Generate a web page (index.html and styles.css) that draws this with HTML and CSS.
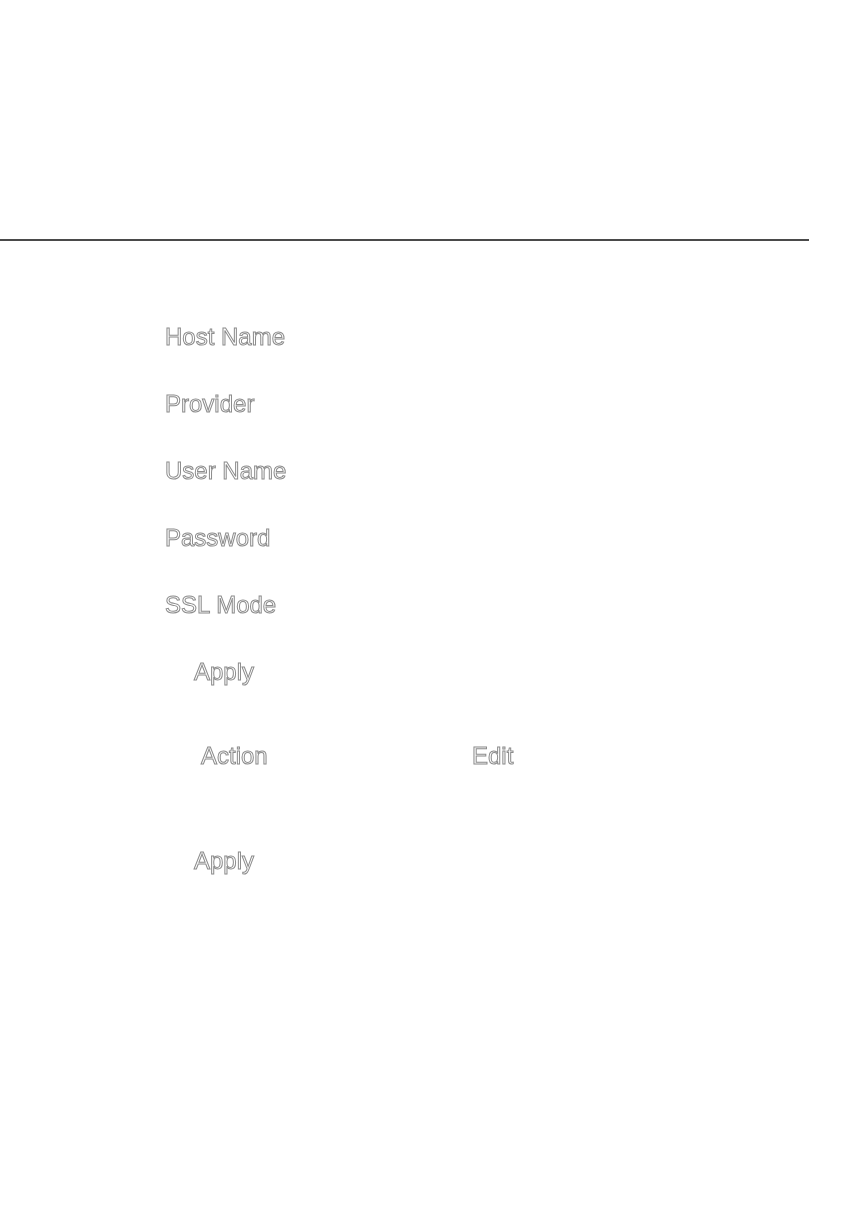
FILE: index.html
```html
<!DOCTYPE html>
<html lang="en">
<head>
    <meta charset="UTF-8">
    <meta name="viewport" content="width=device-width, initial-scale=1.0">
    <title>Connection Settings</title>
    <link rel="stylesheet" href="styles.css">
</head>
<body>

    <div class="top-bar"></div>

    <!-- Connection form -->
    <div class="settings">
        <div class="field-row">Host Name</div>
        <div class="field-row">Provider</div>
        <div class="field-row">User Name</div>
        <div class="field-row">Password</div>
        <div class="field-row">SSL Mode</div>
        <div class="button-row"><span class="apply-btn">Apply</span></div>
    </div>

    <!-- Actions table -->
    <table class="actions">
        <thead>
            <tr>
                <th class="col-action">Action</th>
                <th class="col-edit">Edit</th>
            </tr>
        </thead>
    </table>

    <div class="button-row bottom"><span class="apply-btn">Apply</span></div>

</body>
</html>
```

FILE: styles.css
```css
body {
    margin: 0;
    font-family: "Liberation Sans", Arial, sans-serif;
    font-size: 24px;
    color: transparent;
    -webkit-text-stroke: 1px #8c8c8c;
    background: #fff;
}
.top-bar {
    width: 809px;
    height: 239px;
    border-bottom: 2px solid #4a4a4a;
}
.settings,
.actions,
.button-row {
    /* keep the outlined text grey, no colour fringes */
    filter: grayscale(100%);
}
.settings {
    padding: 62px 0 0 165px;
}
.field-row {
    height: 67px;
    line-height: 67px;
}
.button-row {
    height: 67px;
    line-height: 67px;
    padding-left: 29px;
}
.actions {
    border-collapse: collapse;
    margin: 17px 0 0 201px;
}
.actions th {
    height: 67px;
    padding: 0;
    font-weight: normal;
    text-align: left;
}
.col-action {
    width: 271px;
}
.button-row.bottom {
    margin-top: 38px;
    padding-left: 194px;
}
```
